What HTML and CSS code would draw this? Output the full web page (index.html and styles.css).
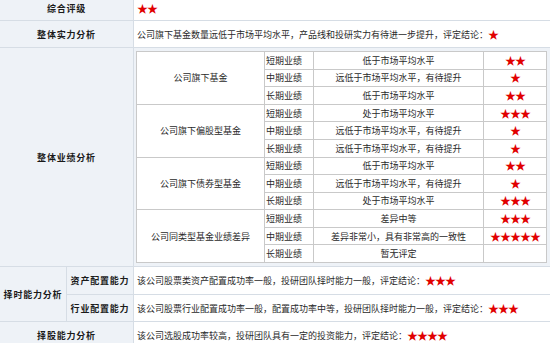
FILE: index.html
```html
<!DOCTYPE html>
<html lang="zh-CN">
<head>
<meta charset="utf-8">
<title>基金公司评级</title>
<link rel="stylesheet" href="styles.css">
</head>
<body>
<div class="rating">
  <div class="lbl span2 r1">综合评级</div>
  <div class="val r1"><span class="stars">★★</span></div>

  <div class="lbl span2">整体实力分析</div>
  <div class="val">公司旗下基金数量远低于市场平均水平，产品线和投研实力有待进一步提升，评定结论：<span class="stars">★</span></div>

  <div class="lbl span2">整体业绩分析</div>
  <div class="nest">
    <div class="inner">
      <div class="grp">公司旗下基金</div>
      <div class="per">短期业绩</div><div class="desc">低于市场平均水平</div><div class="st"><span class="stars">★★</span></div>
      <div class="per">中期业绩</div><div class="desc">远低于市场平均水平，有待提升</div><div class="st"><span class="stars">★</span></div>
      <div class="per">长期业绩</div><div class="desc">低于市场平均水平</div><div class="st"><span class="stars">★★</span></div>

      <div class="grp">公司旗下偏股型基金</div>
      <div class="per">短期业绩</div><div class="desc">处于市场平均水平</div><div class="st"><span class="stars">★★★</span></div>
      <div class="per">中期业绩</div><div class="desc">远低于市场平均水平，有待提升</div><div class="st"><span class="stars">★</span></div>
      <div class="per">长期业绩</div><div class="desc">远低于市场平均水平，有待提升</div><div class="st"><span class="stars">★</span></div>

      <div class="grp">公司旗下债券型基金</div>
      <div class="per">短期业绩</div><div class="desc">低于市场平均水平</div><div class="st"><span class="stars">★★</span></div>
      <div class="per">中期业绩</div><div class="desc">远低于市场平均水平，有待提升</div><div class="st"><span class="stars">★</span></div>
      <div class="per">长期业绩</div><div class="desc">处于市场平均水平</div><div class="st"><span class="stars">★★★</span></div>

      <div class="grp">公司同类型基金业绩差异</div>
      <div class="per">短期业绩</div><div class="desc">差异中等</div><div class="st"><span class="stars">★★★</span></div>
      <div class="per">中期业绩</div><div class="desc">差异非常小，具有非常高的一致性</div><div class="st"><span class="stars">★★★★★</span></div>
      <div class="per">长期业绩</div><div class="desc">暂无评定</div><div class="st"></div>
    </div>
  </div>

  <div class="lbl rspan2">择时能力分析</div>
  <div class="lbl sub">资产配置能力</div>
  <div class="val">该公司股票类资产配置成功率一般，投研团队择时能力一般，评定结论：<span class="stars">★★★</span></div>
  <div class="lbl sub">行业配置能力</div>
  <div class="val">该公司股票行业配置成功率一般，配置成功率中等，投研团队择时能力一般，评定结论：<span class="stars">★★★</span></div>

  <div class="lbl span2">择股能力分析</div>
  <div class="val">该公司选股成功率较高，投研团队具有一定的投资能力，评定结论：<span class="stars">★★★★</span></div>
</div>
</body>
</html>
```

FILE: styles.css
```css
html, body {
  margin: 0;
  padding: 0;
  background: #ffffff;
}

body {
  width: 550px;
  height: 343px;
  overflow: hidden;
  font-family: "Noto Sans CJK SC", "Noto Sans", sans-serif;
  font-size: 9px;
  color: #2a2a2a;
}

.rating {
  display: grid;
  grid-template-columns: 66px 66px 1fr;
  grid-template-rows: 20px 26px 218px 27px 26px 26px;
  gap: 1px;
  background: #d6dde5;
  width: 550px;
}

.lbl {
  background: #eef2f7;
  font-weight: bold;
  color: #1a1a1a;
  letter-spacing: 0.8px;
  display: flex;
  align-items: center;
  justify-content: center;
  white-space: nowrap;
}

.span2 {
  grid-column: span 2;
}

.rspan2 {
  grid-row: span 2;
}

.sub {
  justify-content: center;
}

.r1 {
  padding-bottom: 3px;
}

.val {
  background: #ffffff;
  display: flex;
  align-items: center;
  padding-left: 3px;
  white-space: nowrap;
}

.stars {
  font-family: "Noto Sans CJK SC", sans-serif;
  font-size: 11px;
  font-weight: bold;
  color: #e10000;
  letter-spacing: -1px;
  line-height: 1;
}

.nest {
  background: #eef2f7;
  padding: 3px 3px 3px 2px;
}

.inner {
  display: grid;
  grid-template-columns: 127px 48px 169px 1fr;
  grid-template-rows: repeat(12, 1fr);
  gap: 1px;
  padding: 1px;
  height: 212px;
  box-sizing: border-box;
  background: #c9c9c9;
}

.inner > div {
  background: #ffffff;
  display: flex;
  align-items: center;
  white-space: nowrap;
}

.inner .grp {
  grid-row: span 3;
  justify-content: center;
}

.inner .per {
  padding-left: 1px;
}

.inner .desc,
.inner .st {
  justify-content: center;
}
```
